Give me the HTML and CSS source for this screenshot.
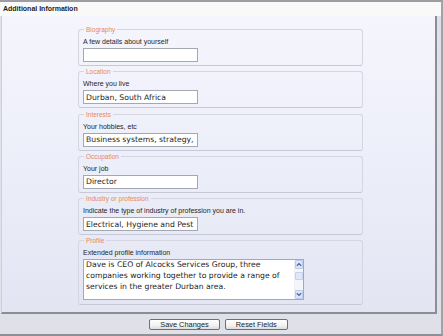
FILE: index.html
```html
<!DOCTYPE html>
<html lang="en">
<head>
    <meta charset="UTF-8">
    <title>Additional Information</title>
    <link rel="stylesheet" href="styles.css">
</head>
<body>
    <div class="window">
        <div class="window-header">Additional Information</div>

        <div class="panel">
            <form class="profile-form">
                <fieldset class="field-group">
                    <legend>Biography</legend>
                    <label class="field-label">A few details about yourself</label>
                    <input class="field-input" type="text" value="">
                </fieldset>

                <fieldset class="field-group">
                    <legend>Location</legend>
                    <label class="field-label">Where you live</label>
                    <input class="field-input" type="text" value="Durban, South Africa">
                </fieldset>

                <fieldset class="field-group">
                    <legend>Interests</legend>
                    <label class="field-label">Your hobbies, etc</label>
                    <input class="field-input" type="text" value="Business systems, strategy, management">
                </fieldset>

                <fieldset class="field-group">
                    <legend>Occupation</legend>
                    <label class="field-label">Your job</label>
                    <input class="field-input" type="text" value="Director">
                </fieldset>

                <fieldset class="field-group">
                    <legend>Industry or profession</legend>
                    <label class="field-label">Indicate the type of industry of profession you are in.</label>
                    <input class="field-input" type="text" value="Electrical, Hygiene and Pest Control">
                </fieldset>

                <fieldset class="field-group field-group-last">
                    <legend>Profile</legend>
                    <label class="field-label">Extended profile information</label>
                    <div class="textarea-box">
                        <textarea class="field-textarea">Dave is CEO of Alcocks Services Group, three companies working together to provide a range of services in the greater Durban area.</textarea>
                        <div class="scrollbar">
                            <span class="scroll-btn">
                                <svg width="7" height="5" viewBox="0 0 7 5"><path d="M1 4 L3.5 1.5 L6 4" fill="none" stroke="#3d62b0" stroke-width="1.4"/></svg>
                            </span>
                            <span class="scroll-thumb"></span>
                            <span class="scroll-track"></span>
                            <span class="scroll-btn">
                                <svg width="7" height="5" viewBox="0 0 7 5"><path d="M1 1 L3.5 3.5 L6 1" fill="none" stroke="#3d62b0" stroke-width="1.4"/></svg>
                            </span>
                        </div>
                    </div>
                </fieldset>
            </form>
        </div>

        <div class="actions">
            <button class="action-btn" type="button">Save Changes</button>
            <button class="action-btn" type="button">Reset Fields</button>
        </div>
    </div>
</body>
</html>
```

FILE: styles.css
```css
* {
    margin: 0;
    padding: 0;
    box-sizing: border-box;
}

body {
    font-family: 'Liberation Sans', Arial, sans-serif;
    background: #dfe0e8;
    color: #222222;
}

/* Outer window */
.window {
    height: 336px;
    display: flex;
    flex-direction: column;
    background: #dfe0e8;
    border-top: 2px solid #9c9ca2;
    border-right: 2px solid #a2a2a8;
    border-bottom: 2px solid #8e8e96;
}

.window-header {
    height: 14px;
    line-height: 14px;
    padding-left: 3px;
    font-size: 7px;
    font-weight: bold;
    color: #1e1e1e;
    background: #f9f9f9;
}

/* Form panel */
.panel {
    flex: 1;
    margin: 0 4px 0 1px;
    padding: 10px 0 0 76px;
    background: linear-gradient(180deg, #f5f5fd 0%, #eceef9 50%, #e3e5f3 100%);
    border-left: 1px solid #cfd0dc;
    border-right: 2px solid #8c8d96;
    border-bottom: 2px solid #8c8d96;
}

.profile-form {
    width: 285px;
}

.field-group {
    border: 1px solid #d5d6e2;
    border-bottom-color: #c8c9d6;
    border-radius: 3px;
    padding: 4px 4px 3px 4px;
    margin-bottom: 2.3px;
    min-width: 0;
}

.field-group legend {
    font-size: 6.5px;
    line-height: 7px;
    color: #e9885a;
    padding: 0 2px;
    margin-left: 1px;
}

.field-label {
    display: block;
    font-size: 7px;
    line-height: 10px;
    color: #262626;
    margin-bottom: 1px;
    white-space: nowrap;
}

.field-input {
    display: block;
    width: 115px;
    height: 14px;
    padding: 0 2px;
    font-family: 'DejaVu Sans', Verdana, sans-serif;
    font-size: 7.7px;
    color: #1c1c1c;
    background: #ffffff;
    border: 1px solid #a4a8b2;
    outline: none;
}

.field-group-last {
    padding-bottom: 4px;
}

/* Profile textarea with its own scrollbar */
.textarea-box {
    display: flex;
    width: 221px;
    height: 41px;
    background: #ffffff;
    border: 1px solid #a4a8b2;
}

.field-textarea {
    flex: 1;
    padding: 0 2px;
    font-family: 'DejaVu Sans', Verdana, sans-serif;
    font-size: 7.7px;
    line-height: 10.8px;
    color: #1c1c1c;
    border: none;
    outline: none;
    resize: none;
    overflow: hidden;
    background: transparent;
}

.scrollbar {
    width: 9px;
    display: flex;
    flex-direction: column;
    background: #f3f5fb;
    border-left: 1px solid #eef0f6;
}

.scroll-btn {
    height: 9px;
    display: flex;
    align-items: center;
    justify-content: center;
    background: #dbe5f8;
    border: 1px solid #bccbea;
    border-radius: 1px;
}

.scroll-thumb {
    height: 8px;
    margin-top: 3px;
    background: #dfe7f8;
    border: 1px solid #c5d2ee;
    border-radius: 1px;
}

.scroll-track {
    flex: 1;
}

/* Bottom buttons */
.actions {
    height: 20px;
    display: flex;
    align-items: center;
    justify-content: center;
    gap: 5px;
    padding-right: 4px;
}

.action-btn {
    height: 11px;
    padding: 0 10px;
    font-family: 'Liberation Sans', Arial, sans-serif;
    font-size: 7.4px;
    line-height: 9px;
    color: #222222;
    background: linear-gradient(180deg, #ffffff 0%, #f2f2f2 60%, #dcdcdc 100%);
    border: 1px solid #6f6f74;
    border-radius: 2px;
}
```
